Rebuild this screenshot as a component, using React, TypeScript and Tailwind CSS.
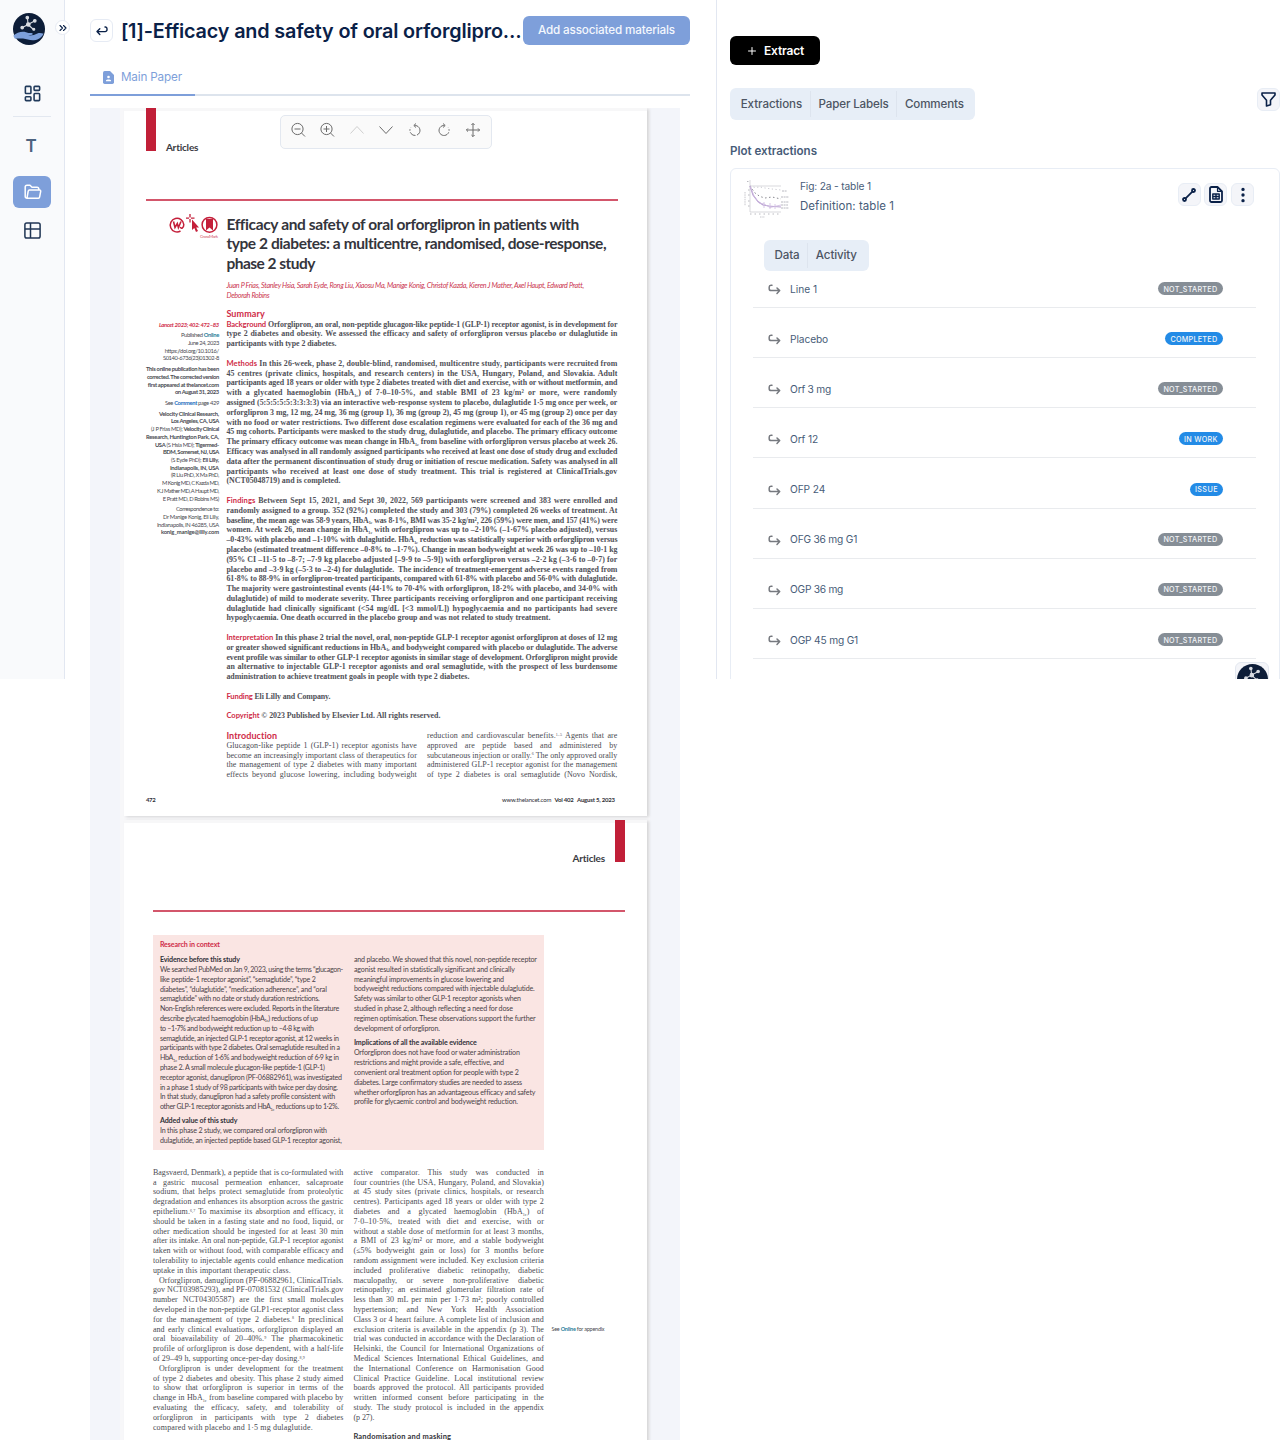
import { useLayoutEffect, useRef, type ReactNode } from "react";
import { LayoutDashboard, Plus, ChevronsRight } from "lucide-react";
import { BsThreeDotsVertical } from "react-icons/bs";
import { TbLine } from "react-icons/tb";

/* Inline text tracked to an exact measure. */
function Fit({ w, className = "", children }: { w: number; className?: string; children: ReactNode }) {
  const ref = useRef<HTMLSpanElement>(null);
  useLayoutEffect(() => {
    const el = ref.current;
    if (!el) return;
    el.style.letterSpacing = "0px";
    const natural = el.getBoundingClientRect().width;
    const n = (el.textContent || "").length || 1;
    el.style.letterSpacing = (w - natural) / n + "px";
  }, [w]);
  return (
    <span ref={ref} className={"inline-block whitespace-nowrap " + className}>
      {children}
    </span>
  );
}

/* "~" is the 1c subscript, "^…^" a superscript reference. */
function rich(text: string) {
  return text.split(/(~|\^[^^]*\^)/).map((s, i) => {
    if (s === "~") return <span key={i} className="relative top-[1.5px] text-[4px]">1c</span>;
    if (s.startsWith("^")) return <span key={i} className="relative -top-[2.5px] text-[4px]">{s.slice(1, -1)}</span>;
    return s;
  });
}

/* One set line of the paper: justified to the measure w, or tracked to it when `end` is given. */
function Line({ t, w, end, label, indent }: { t: string; w: number; end?: number; label?: string; indent?: boolean }) {
  const ref = useRef<HTMLSpanElement>(null);
  useLayoutEffect(() => {
    const el = ref.current;
    if (!el) return;
    el.style.letterSpacing = "0px";
    el.style.wordSpacing = "0px";
    const target = (end ?? w) - (indent ? 6 : 0);
    const natural = el.getBoundingClientRect().width;
    const txt = el.textContent || "";
    const spaces = (txt.match(/ /g) || []).length || 1;
    const diff = target - natural;
    if (end !== undefined || diff < 0) el.style.letterSpacing = diff / txt.length + "px";
    else {
      const ls = Math.min(0.08, diff / txt.length);
      el.style.letterSpacing = ls + "px";
      el.style.wordSpacing = (diff - ls * txt.length) / spaces + "px";
    }
  }, [w, end, indent]);
  return (
    <div className={"h-[9.8px] whitespace-pre leading-[9.8px] " + (indent ? "pl-[6px]" : "")}>
      <span ref={ref} className="inline-block">
        {label && <span className="font-['Lato'] text-[7.6px] font-bold text-[#cf2c48]">{label} </span>}
        {rich(t)}
      </span>
    </div>
  );
}

type L = { t: string; end?: number; label?: string; indent?: boolean } | string;

function Lines({ lines, w }: { lines: L[]; w: number }) {
  return (
    <>
      {lines.map((l, i) => {
        const o = typeof l === "string" ? { t: l } : l;
        return o.t === "" ? <div key={i} className="h-[9.8px]" /> : <Line key={i} w={w} {...o} />;
      })}
    </>
  );
}

const abstract: L[] = [
  { label: "Background", t: "Orforglipron, an oral, non-peptide glucagon-like peptide-1 (GLP-1) receptor agonist, is in development for" },
  "type 2 diabetes and obesity. We assessed the efficacy and safety of orforglipron versus placebo or dulaglutide in",
  { t: "participants with type 2 diabetes.", end: 110 },
  "",
  { label: "Methods", t: "In this 26-week, phase 2, double-blind, randomised, multicentre study, participants were recruited from" },
  "45 centres (private clinics, hospitals, and research centers) in the USA, Hungary, Poland, and Slovakia. Adult",
  "participants aged 18 years or older with type 2 diabetes treated with diet and exercise, with or without metformin, and",
  "with a glycated haemoglobin (HbA~) of 7·0–10·5%, and stable BMI of 23 kg/m² or more, were randomly",
  "assigned (5:5:5:5:5:3:3:3:3) via an interactive web-response system to placebo, dulaglutide 1·5 mg once per week, or",
  "orforglipron 3 mg, 12 mg, 24 mg, 36 mg (group 1), 36 mg (group 2), 45 mg (group 1), or 45 mg (group 2) once per day",
  "with no food or water restrictions. Two different dose escalation regimens were evaluated for each of the 36 mg and",
  "45 mg cohorts. Participants were masked to the study drug, dulaglutide, and placebo. The primary efficacy outcome",
  "The primary efficacy outcome was mean change in HbA~ from baseline with orforglipron versus placebo at week 26.",
  "Efficacy was analysed in all randomly assigned participants who received at least one dose of study drug and excluded",
  "data after the permanent discontinuation of study drug or initiation of rescue medication. Safety was analysed in all",
  "participants who received at least one dose of study treatment. This trial is registered at ClinicalTrials.gov",
  { t: "(NCT05048719) and is completed.", end: 114 },
  "",
  { label: "Findings", t: "Between Sept 15, 2021, and Sept 30, 2022, 569 participants were screened and 383 were enrolled and" },
  "randomly assigned to a group. 352 (92%) completed the study and 303 (79%) completed 26 weeks of treatment. At",
  "baseline, the mean age was 58·9 years, HbA~ was 8·1%, BMI was 35·2 kg/m², 226 (59%) were men, and 157 (41%) were",
  "women. At week 26, mean change in HbA~ with orforglipron was up to –2·10% (–1·67% placebo adjusted), versus",
  "–0·43% with placebo and –1·10% with dulaglutide. HbA~ reduction was statistically superior with orforglipron versus",
  "placebo (estimated treatment difference –0·8% to –1·7%). Change in mean bodyweight at week 26 was up to –10·1 kg",
  "(95% CI –11·5 to –8·7; –7·9 kg placebo adjusted [–9·9 to –5·9]) with orforglipron versus –2·2 kg (–3·6 to –0·7) for",
  "placebo and –3·9 kg (–5·3 to –2·4) for dulaglutide.  The incidence of treatment-emergent adverse events ranged from",
  "61·8% to 88·9% in orforglipron-treated participants, compared with 61·8% with placebo and 56·0% with dulaglutide.",
  "The majority were gastrointestinal events (44·1% to 70·4% with orforglipron, 18·2% with placebo, and 34·0% with",
  "dulaglutide) of mild to moderate severity. Three participants receiving orforglipron and one participant receiving",
  "dulaglutide had clinically significant (<54 mg/dL [<3 mmol/L]) hypoglycaemia and no participants had severe",
  { t: "hypoglycaemia. One death occurred in the placebo group and was not related to study treatment.", end: 324 },
  "",
  { label: "Interpretation", t: "In this phase 2 trial the novel, oral, non-peptide GLP-1 receptor agonist orforglipron at doses of 12 mg" },
  "or greater showed significant reductions in HbA~ and bodyweight compared with placebo or dulaglutide. The adverse",
  "event profile was similar to other GLP-1 receptor agonists in similar stage of development. Orforglipron might provide",
  "an alternative to injectable GLP-1 receptor agonists and oral semaglutide, with the prospect of less burdensome",
  { t: "administration to achieve treatment goals in people with type 2 diabetes.", end: 243 },
  "",
  { label: "Funding", t: "Eli Lilly and Company.", end: 104 },
  "",
  { label: "Copyright", t: "© 2023 Published by Elsevier Ltd. All rights reserved.", end: 214 },
  "",
];

const introLeft: L[] = [
  "Glucagon-like peptide 1 (GLP-1) receptor agonists have",
  "become an increasingly important class of therapeutics for",
  "the management of type 2 diabetes with many important",
  "effects beyond glucose lowering, including bodyweight",
];
const introRight: L[] = [
  "reduction and cardiovascular benefits.^1–5^ Agents that are",
  "approved are peptide based and administered by",
  "subcutaneous injection or orally.^6^ The only approved orally",
  "administered GLP-1 receptor agonist for the management",
  "of type 2 diabetes is oral semaglutide (Novo Nordisk,",
];

const bodyLeft: L[] = [
  "Bagsvaerd, Denmark), a peptide that is co-formulated with",
  "a gastric mucosal permeation enhancer, salcaproate",
  "sodium, that helps protect semaglutide from proteolytic",
  "degradation and enhances its absorption across the gastric",
  "epithelium.^6,7^ To maximise its absorption and efficacy, it",
  "should be taken in a fasting state and no food, liquid, or",
  "other medication should be ingested for at least 30 min",
  "after its intake. An oral non-peptide, GLP-1 receptor agonist",
  "taken with or without food, with comparable efficacy and",
  "tolerability to injectable agents could enhance medication",
  { t: "uptake in this important therapeutic class.", end: 138 },
  { t: "Orforglipron, danuglipron (PF-06882961, ClinicalTrials.", indent: true },
  "gov NCT03985293), and PF-07081532 (ClinicalTrials.gov",
  "number NCT04305587) are the first small molecules",
  "developed in the non-peptide GLP1-receptor agonist class",
  "for the management of type 2 diabetes.^8^ In preclinical",
  "and early clinical evaluations, orforglipron displayed an",
  "oral bioavailability of 20–40%.^9^ The pharmacokinetic",
  "profile of orforglipron is dose dependent, with a half-life",
  { t: "of 29–49 h, supporting once-per-day dosing.^8,9^", end: 152 },
  { t: "Orforglipron is under development for the treatment", indent: true },
  "of type 2 diabetes and obesity. This phase 2 study aimed",
  "to show that orforglipron is superior in terms of the",
  "change in HbA~ from baseline compared with placebo by",
  "evaluating the efficacy, safety, and tolerability of",
  "orforglipron in participants with type 2 diabetes",
  { t: "compared with placebo and 1·5 mg dulaglutide.", end: 160 },
];
const bodyRight: L[] = [
  "active comparator. This study was conducted in",
  "four countries (the USA, Hungary, Poland, and Slovakia)",
  "at 45 study sites (private clinics, hospitals, or research",
  "centres). Participants aged 18 years or older with type 2",
  "diabetes and a glycated haemoglobin (HbA~) of",
  "7·0–10·5%, treated with diet and exercise, with or",
  "without a stable dose of metformin for at least 3 months,",
  "a BMI of 23 kg/m² or more, and a stable bodyweight",
  "(≤5% bodyweight gain or loss) for 3 months before",
  "random assignment were included. Key exclusion criteria",
  "included proliferative diabetic retinopathy, diabetic",
  "maculopathy, or severe non-proliferative diabetic",
  "retinopathy; an estimated glomerular filtration rate of",
  "less than 30 mL per min per 1·73 m²; poorly controlled",
  "hypertension; and New York Health Association",
  "Class 3 or 4 heart failure. A complete list of inclusion and",
  "exclusion criteria is available in the appendix (p 3). The",
  "trial was conducted in accordance with the Declaration of",
  "Helsinki, the Council for International Organizations of",
  "Medical Sciences International Ethical Guidelines, and",
  "the International Conference on Harmonisation Good",
  "Clinical Practice Guideline. Local institutional review",
  "boards approved the protocol. All participants provided",
  "written informed consent before participating in the",
  "study. The study protocol is included in the appendix",
  { t: "(p 27).", end: 21 },
];

const boxLeft: L[] = [
  { t: "We searched PubMed on Jan 9, 2023, using the terms “glucagon-", end: 183 },
  { t: "like peptide-1 receptor agonist”, “semaglutide”, “type 2", end: 156 },
  { t: "diabetes”, “dulaglutide”, “medication adherence”, and “oral", end: 167 },
  { t: "semaglutide” with no date or study duration restrictions.", end: 160 },
  { t: "Non-English references were excluded. Reports in the literature", end: 179 },
  { t: "describe glycated haemoglobin (HbA~) reductions of up", end: 158 },
  { t: "to –1·7% and bodyweight reduction up to –4·8 kg with", end: 154 },
  { t: "semaglutide, an injected GLP-1 receptor agonist, at 12 weeks in", end: 179 },
  { t: "participants with type 2 diabetes. Oral semaglutide resulted in a", end: 180 },
  { t: "HbA~ reduction of 1·6% and bodyweight reduction of 6·9 kg in", end: 179 },
  { t: "phase 2. A small molecule glucagon-like peptide-1 (GLP-1)", end: 165 },
  { t: "receptor agonist, danuglipron (PF-06882961), was investigated", end: 182 },
  { t: "in a phase 1 study of 98 participants with twice per day dosing.", end: 178 },
  { t: "In that study, danuglipron had a safety profile consistent with", end: 175 },
  { t: "other GLP-1 receptor agonists and HbA~ reductions up to 1·2%.", end: 179 },
];
const boxLeft2: L[] = [
  { t: "In this phase 2 study, we compared oral orforglipron with", end: 167 },
  { t: "dulaglutide, an injected peptide based GLP-1 receptor agonist,", end: 182 },
];
const boxRight: L[] = [
  { t: "and placebo. We showed that this novel, non-peptide receptor", end: 183 },
  { t: "agonist resulted in statistically significant and clinically", end: 161 },
  { t: "meaningful improvements in glucose lowering and", end: 150 },
  { t: "bodyweight reductions compared with injectable dulaglutide.", end: 181 },
  { t: "Safety was similar to other GLP-1 receptor agonists when", end: 167 },
  { t: "studied in phase 2, although reflecting a need for dose", end: 159 },
  { t: "regimen optimisation. These observations support the further", end: 182 },
  { t: "development of orforglipron.", end: 86 },
];
const boxRight2: L[] = [
  { t: "Orforglipron does not have food or water administration", end: 166 },
  { t: "restrictions and might provide a safe, effective, and", end: 150 },
  { t: "convenient oral treatment option for people with type 2", end: 165 },
  { t: "diabetes. Large confirmatory studies are needed to assess", end: 168 },
  { t: "whether orforglipron has an advantageous efficacy and safety", end: 181 },
  { t: "profile for glycaemic control and bodyweight reduction.", end: 164 },
];

const sideNotes: [number, ReactNode][][] = [
  [[60, <b className="font-bold italic text-[#cf2c48]">Lancet 2023; 402: 472–83</b>]],
  [
    [38, <>Published <b className="text-[#2b7f9c]">Online</b></>],
    [31, "June 24, 2023"],
    [54, "https://doi.org/10.1016/"],
    [56, "S0140-6736(23)01302-8"],
  ],
  [
    [73, <b>This online publication has been</b>],
    [72, <b>corrected. The corrected version</b>],
    [71, <b>first appeared at thelancet.com</b>],
    [44, <b>on August 31, 2023</b>],
  ],
  [[54, <>See <b className="text-[#1f6fc0]">Comment</b> page 429</>]],
  [
    [60, <b>Velocity Clinical Research,</b>],
    [48, <b>Los Angeles, CA, USA</b>],
    [68, <>(J P Frias MD); <b>Velocity Clinical</b></>],
    [73, <b>Research, Huntington Park, CA,</b>],
    [64, <><b>USA</b> (S Hsia MD); <b>Tigermed-</b></>],
    [56, <b>BDM, Somerset, NJ, USA</b>],
    [48, <>(S Eyde PhD); <b>Eli Lilly,</b></>],
    [49, <b>Indianapolis, IN, USA</b>],
    [48, "(R Liu PhD, X Ma PhD,"],
    [57, "M Konig MD, C Kazda MD,"],
    [62, "K J Mather MD, A Haupt MD,"],
    [56, "E Pratt MD, D Robins MS)"],
  ],
  [
    [43, "Correspondence to:"],
    [56, "Dr Manige Konig, Eli Lilly,"],
    [62, "Indianapolis, IN 46285, USA"],
    [58, <b>konig_manige@lilly.com</b>],
  ],
];

const rows: { name: string; w: number; status: string; bw: string; tw: number; blue?: boolean }[] = [
  { name: "Line 1", w: 27, status: "NOT_STARTED", bw: "w-[65px]", tw: 54 },
  { name: "Placebo", w: 38, status: "COMPLETED", bw: "w-[58px]", tw: 47, blue: true },
  { name: "Orf 3 mg", w: 41, status: "NOT_STARTED", bw: "w-[65px]", tw: 54 },
  { name: "Orf 12", w: 28, status: "IN WORK", bw: "w-[44px]", tw: 34, blue: true },
  { name: "OFP 24", w: 35, status: "ISSUE", bw: "w-[33px]", tw: 23, blue: true },
  { name: "OFG 36 mg G1", w: 67, status: "NOT_STARTED", bw: "w-[65px]", tw: 54 },
  { name: "OGP 36 mg", w: 53, status: "NOT_STARTED", bw: "w-[65px]", tw: 54 },
  { name: "OGP 45 mg G1", w: 68, status: "NOT_STARTED", bw: "w-[65px]", tw: 54 },
];

function Logo({ size }: { size: number }) {
  return (
    <svg width={size} height={size} viewBox="0 0 32 32" className="shrink-0">
      <circle cx="16" cy="16" r="16" fill="#0d1d38" />
      <g stroke="#d9dce2" strokeWidth="1.100" fill="#d9dce2">
        <path d="M15 11.500 14.500 5M15 11.500 21.500 8M15 11.500 9.500 14.500M15 11.500 20.500 16.500" fill="none" />
        <circle cx="15.300" cy="11.500" r="1.800" />
        <circle cx="14.300" cy="4.600" r="1.300" />
        <circle cx="21.800" cy="7.800" r="1.300" />
        <circle cx="9.200" cy="14.600" r="1.300" />
        <circle cx="20.800" cy="16.300" r="1" />
      </g>
      <path
        d="M0.400 22.500C4 19.200 9 18 13 19.200c2 .6 3.500 1 5.500.9 1.400 0 1.700 1.200.6 1.600l-4 .7c3 .6 6.500-.4 9.300-1.800 1.800-.9 4-.5 6.300.1C29 23.500 26 26.800 21 27.200c-4 .4-7-1-11-1.600-3-.4-5.500-.2-8 .1C1.200 24.900.7 23.800.4 22.500z"
        fill="#7d9fda"
      />
    </svg>
  );
}

const reply = (
  <svg width="13" height="12" viewBox="0 0 13 12" fill="none" stroke="#76797f" strokeWidth="1.500" strokeLinecap="round" strokeLinejoin="round">
    <path d="M4 1.200H3A1.900 1.900 0 0 0 1.200 3.100V4.700A1.900 1.900 0 0 0 3.100 6.600H11.500M9 4 11.700 6.600 9 9.400" />
  </svg>
);

function IconButton({ children }: { children: ReactNode }) {
  return (
    <div className="flex h-[23px] w-[23px] items-center justify-center rounded-[6px] border border-[#e8edf5] bg-[#f4f5f9] text-[#0a2148]">
      {children}
    </div>
  );
}

function Sidebar() {
  return (
    <aside className="relative flex h-[679px] w-[65px] shrink-0 flex-col border-r border-[#e2e7f1] bg-[#f9fafc] pl-[13px] pt-[13px]">
      <div><Logo size={32} /></div>
      <div className="absolute left-[55px] top-5 z-10 flex h-[15px] w-[15px] items-center justify-center rounded-full border border-[#e6eaf3] bg-white text-[#0a2148]">
        <ChevronsRight size={12} strokeWidth={2.200} className="shrink-0" />
      </div>
      <div className="mt-[39px] flex w-[39px] justify-center text-[#213a5b]">
        <LayoutDashboard size={19} strokeWidth={2} />
      </div>
      <div className="mt-[13px] h-px w-[38px] bg-[#e3e8f0]" />
      <div className="mt-[18px] flex h-6 w-[38px] items-center justify-center pr-[2px] font-['Inter'] text-[17px] font-semibold text-[#4d6380]">T</div>
      <div className="mt-[16.500px] flex h-[32.500px] w-[38px] items-center justify-center rounded-[6px] bg-[#7e9fda] text-white">
        <svg width="18" height="16" viewBox="0 0 18 16" fill="none" stroke="currentColor" strokeWidth="1.500" strokeLinejoin="round" className="ml-px">
          <path d="M3 14.200H14.400a1.200 1.200 0 0 0 1.200-1L16.700 7.300a1 1 0 0 0-1-1.200H5.500a1.300 1.300 0 0 0-1.300 1L3 14.200ZM3 14.200A1.800 1.800 0 0 1 1.200 12.400V3A1.800 1.800 0 0 1 3 1.200H6L8 3.200H13A1.800 1.800 0 0 1 14.800 5V6" />
        </svg>
      </div>
      <div className="mt-[14px] flex w-[39px] justify-center">
        <svg width="17" height="17" viewBox="0 0 17 17" fill="none" stroke="#203554" strokeWidth="1.500">
          <rect x="0.900" y="0.900" width="15.200" height="15.200" rx="1.800" />
          <path d="M6.500 1V16M1 7H16" />
        </svg>
      </div>
    </aside>
  );
}

function Toolbar() {
  return (
    <div className="absolute left-[190px] top-[6.500px] z-10 flex h-[34px] w-[212px] items-start gap-[9.100px] rounded-[5px] border border-[#e3e8f0] bg-[#fafafa] pl-[7px] pt-[4.500px]">
      {[
        <><circle cx="9.500" cy="9" r="5.600" /><path d="M13.500 13 17 16.500M6.500 9H12.500" /></>,
        <><circle cx="9.500" cy="9" r="5.600" /><path d="M13.500 13 17 16.500M6.500 9H12.500M9.500 6V12" /></>,
        <path d="M3.500 13.500 10 6.500 16.500 13.500" stroke="#cfcfcf" />,
        <path d="M3.500 6.500 10 13.500 16.500 6.500" />,
        <><path d="M9.500 5.500A5 5 0 1 1 6 13.500" strokeDasharray="14 1.500" /><path d="M6 13.500A5 5 0 0 1 5.800 7.500" strokeDasharray="1.500 1.500" /><path d="M11 3.500 8.800 5.500 11 7.500" /></>,
        <><path d="M10.500 5.500A5 5 0 1 0 14 13.500" /><path d="M14 13.500A5 5 0 0 0 14.200 7.500" strokeDasharray="1.500 1.500" /><path d="M9 3.500 11.200 5.500 9 7.500" /></>,
        <path d="M10 3.500V16.500M3.500 10H16.500M8.400 5 10 3.400 11.600 5M8.400 15 10 16.600 11.600 15M5 8.400 3.400 10 5 11.600M15 8.400 16.600 10 15 11.600" />,
      ].map((p, i) => (
        <svg key={i} width="20" height="20" viewBox="0 0 20 20" fill="none" stroke="#6b6b6b" strokeWidth="1" className="shrink-0">
          {p}
        </svg>
      ))}
    </div>
  );
}

function PageOne() {
  return (
    <div className="h-[708px] w-[523px] border-t-[3px] border-[#f7f7f8] bg-white pl-[22px] font-['Lato'] text-[#2f3038] shadow-[2px_1px_3px_rgba(0,0,0,0.14)]">
      <div className="-mt-[3px] flex">
        <div className="h-[42.500px] w-[10px] bg-[#c11f38]" />
        <div className="pl-[10px] pt-[31.500px] text-[10px] font-bold leading-[14px] text-[#3a3b42]">
          <Fit w={32.500}>Articles</Fit>
        </div>
      </div>
      <div className="mt-[45px] h-[2px] w-[472px] bg-[#d3566b]" />
      <div className="flex">
        <div className="w-[73px] shrink-0 pt-[13px]">
          <div className="flex h-[29px] justify-end">
            <svg width="51" height="26" viewBox="0 0 51 26" fill="none" stroke="#c41f3a">
              <path d="M12.500 17A6.800 6.800 0 1 1 15.800 10.500C15.800 14.500 13 15 12.200 13" strokeWidth="1.500" />
              <path d="M5.500 7.500 7 13.500 9.300 9.500 10.400 13.500 13 7.500" strokeWidth="1.600" />
              <path d="M22 0V3.500M22 5V8.500M18 4.200H21M23 4.200H26.500" strokeWidth="1.300" />
              <path d="M24 5.500V16L26.300 14 28 18 30 17 28.200 13.400H31Z" fill="#c41f3a" stroke="none" />
              <circle cx="41.500" cy="10.800" r="7.400" strokeWidth="1.500" />
              <path d="M38 5H45V16.500L41.500 13.500 38 16.500Z" fill="#c41f3a" stroke="none" />
              <text x="32" y="24" fontSize="4.500" fill="#d4576b" stroke="none" textLength="18">CrossMark</text>
            </svg>
          </div>
          <div className="mt-[78px] flex flex-col gap-[3px] text-right text-[5.800px] text-[#4a4b52]">
            {sideNotes.map((g, i) => (
              <div key={i}>
                {g.map(([w, c], j) => (
                  <div key={j} className="flex h-[7.720px] justify-end leading-[7.720px]">
                    <Fit w={w}>{c}</Fit>
                  </div>
                ))}
              </div>
            ))}
          </div>
        </div>
        <div className="w-[392px] pl-[7.500px] pt-[14.200px]">
          <div className="text-[15.500px] font-bold leading-[19.500px] text-[#34353c]">
            <div className="h-[19.500px]"><Fit w={352}>Efficacy and safety of oral orforglipron in patients with</Fit></div>
            <div className="h-[19.500px]"><Fit w={380}>type 2 diabetes: a multicentre, randomised, dose-response,</Fit></div>
            <div className="h-[19.500px]"><Fit w={88.500}>phase 2 study</Fit></div>
          </div>
          <div className="mt-[8px] text-[7.200px] italic leading-[9.800px] text-[#cb3650]">
            <div className="h-[9.800px]"><Fit w={357}>Juan P Frias, Stanley Hsia, Sarah Eyde, Rong Liu, Xiaosu Ma, Manige Konig, Christof Kazda, Kieren J Mather, Axel Haupt, Edward Pratt,</Fit></div>
            <div className="h-[9.800px]"><Fit w={43}>Deborah Robins</Fit></div>
          </div>
          <div className="mt-[8.500px] h-[9.800px] text-[9px] font-bold leading-[9.800px] text-[#cf2c48]"><Fit w={38.500}>Summary</Fit></div>
          <div className="pt-[0.500px] font-['Liberation_Serif'] text-[7.900px] font-bold text-[#505158]">
            <Lines lines={abstract} w={391} />
          </div>
          <div className="flex w-[392px] gap-[9.500px] font-['Liberation_Serif'] text-[8px] text-[#4a4b52]">
            <div className="w-[191px]">
              <div className="h-[9.800px] font-['Lato'] text-[9px] font-bold leading-[9.800px] text-[#cf2c48]"><Fit w={51}>Introduction</Fit></div>
              <Lines lines={introLeft} w={190.500} />
            </div>
            <div className="w-[191px]"><Lines lines={introRight} w={190.500} /></div>
          </div>
        </div>
      </div>
      <div className="mt-[15px] flex w-[469px] justify-between text-[6px] leading-[9.800px]">
        <Fit w={9.500} className="font-bold">472</Fit>
        <Fit w={113}>www.thelancet.com <b className="ml-[2px]">Vol 402</b> <b className="ml-[2px]">August 5, 2023</b></Fit>
      </div>
    </div>
  );
}

function PageTwo() {
  return (
    <div className="mt-[3.500px] h-[800px] w-[523px] border-t-[3px] border-[#f7f7f8] bg-white pl-[29px] font-['Lato'] text-[#2f3038] shadow-[2px_1px_3px_rgba(0,0,0,0.14)]">
      <div className="-mt-[3px] flex h-[45px] w-[472px] items-start justify-end">
        <div className="pr-[10px] pt-[31px] text-[10px] font-bold leading-[14px] text-[#3a3b42]">
          <Fit w={32.500}>Articles</Fit>
        </div>
        <div className="h-[42.500px] w-[10px] bg-[#c11f38]" />
      </div>
      <div className="mt-[45.500px] h-[2px] w-[472px] bg-[#d3566b]" />
      <div className="mt-[22.500px] h-[215.500px] w-[391.500px] bg-[#fae5e3] px-[7px] pt-[5.200px] text-[7.100px] text-[#4a4348]">
        <div className="h-[9.800px] font-bold leading-[9.800px] text-[#cf2c48]"><Fit w={60}>Research in context</Fit></div>
        <div className="mt-[5.200px] flex gap-[11px]">
          <div className="w-[183px]">
            <div className="mb-[0.500px] h-[9.800px] font-bold leading-[9.800px] text-[#33333a]"><Fit w={80}>Evidence before this study</Fit></div>
            <Lines lines={boxLeft} w={183} />
            <div className="mt-[4.500px] h-[9.800px] font-bold leading-[9.800px] text-[#33333a]"><Fit w={77.500}>Added value of this study</Fit></div>
            <Lines lines={boxLeft2} w={183} />
          </div>
          <div className="w-[183px] pt-[0.300px]">
            <Lines lines={boxRight} w={183} />
            <div className="mb-[0.500px] mt-[4.700px] h-[9.800px] font-bold leading-[9.800px] text-[#33333a]"><Fit w={123}>Implications of all the available evidence</Fit></div>
            <Lines lines={boxRight2} w={183} />
          </div>
        </div>
      </div>
      <div className="mt-[17.900px] flex font-['Liberation_Serif'] text-[8px] text-[#4a4b52]">
        <div className="w-[200.500px]"><Lines lines={bodyLeft} w={190.500} /></div>
        <div className="w-[198px]">
          <Lines lines={bodyRight} w={190.500} />
          <div className="mt-[9px] h-[9.800px] font-['Lato'] text-[7.500px] font-bold leading-[9.800px] text-[#33333a]"><Fit w={98}>Randomisation and masking</Fit></div>
        </div>
        <div className="pt-[157.500px] font-['Lato'] text-[5.500px] leading-[9.800px]">
          <Fit w={53}>See <b className="text-[#2b7f9c]">Online</b> for appendix</Fit>
        </div>
      </div>
    </div>
  );
}

function Reader() {
  return (
    <main className="flex h-[1440px] w-[651px] shrink-0 flex-col overflow-hidden pl-[25.400px] font-['Inter']">
      <div className="flex h-[61px] w-[600px] items-center">
        <div className="flex h-[23px] w-[23px] shrink-0 items-center justify-center rounded-[6px] border border-[#e6ebf4] bg-white">
          <svg width="12" height="10" viewBox="0 0 12 10" fill="none" stroke="#0a2148" strokeWidth="1.400" strokeLinecap="round" strokeLinejoin="round">
            <path d="M9 1H9.400A1.800 1.800 0 0 1 11 2.800V3.800A1.800 1.800 0 0 1 9.200 5.600H1.200M3.800 2.800 1 5.600 3.800 8.400" />
          </svg>
        </div>
        <h1 className="ml-[7.500px] w-[402px] text-[19.800px] font-semibold leading-[28px] text-[#0a2148]">
          <Fit w={400.500}>[1]-Efficacy and safety of oral orforglipro…</Fit>
        </h1>
        <div className="flex h-[29px] w-[167px] shrink-0 items-center justify-center rounded-[6px] bg-[#7e9fda] text-[11.700px] font-medium text-[#f4f7fd]">
          <Fit w={137} className="pt-px">Add associated materials</Fit>
        </div>
      </div>
      <div className="flex h-[35px] w-[600px] border-b-2 border-[#dde4ed]">
        <div className="-mb-[2px] flex w-[104.500px] items-center border-b-2 border-[#7e9fda] pl-[12.500px] text-[11.700px] text-[#7e9fda]">
          <svg width="11" height="13" viewBox="0 0 11 13" fill="#7e9fda">
            <path d="M1.700 0H7L11 4V11.300A1.700 1.700 0 0 1 9.300 13H1.700A1.700 1.700 0 0 1 0 11.300V1.700A1.700 1.700 0 0 1 1.700 0Z" />
            <circle cx="5.500" cy="6" r="1.300" fill="#fff" />
            <path d="M3 10.300V9.500C3.500 8.200 7.500 8.200 8 9.500V10.300Z" fill="#fff" />
          </svg>
          <Fit w={61} className="ml-[7px] pt-px">Main Paper</Fit>
        </div>
      </div>
      <div className="relative mt-3 h-[1332px] w-[590px] overflow-hidden bg-[#f3f5fa]">
        <Toolbar />
        <div className="ml-[30px] h-full w-[530px] bg-[#f7f7f9] pl-[3.500px]">
          <PageOne />
          <PageTwo />
        </div>
      </div>
    </main>
  );
}

function Tabs({ items, className }: { items: [string, number][]; className: string }) {
  return (
    <div className={"flex items-center rounded-[6px] bg-[#e7eef7] py-[3px] text-[11.600px] font-medium text-[#4d5563] " + className}>
      {items.map(([t, w], i) => (
        <div key={t} className={"flex h-full items-center px-[7.700px] " + (i ? "border-l border-[#dde4ee]" : "")}>
          <Fit w={w} className="pt-[2px]">{t}</Fit>
        </div>
      ))}
    </div>
  );
}

function Extractions() {
  return (
    <section className="relative h-[679px] w-[564px] shrink-0 overflow-hidden border-l border-[#e2e7f1] pl-[13px] font-['Inter']">
      <div className="mt-[36px] flex h-[29px] w-[90px] items-center rounded-[6px] bg-black pl-[16px] text-[12px] font-semibold text-white">
        <Plus size={12} strokeWidth={2} />
        <Fit w={40} className="ml-[6px]">Extract</Fit>
      </div>
      <div className="mt-[22.500px] flex items-start justify-between">
        <Tabs className="h-[32px] w-[245px] pl-[3px]" items={[["Extractions", 61.500], ["Paper Labels", 70], ["Comments", 59]]} />
        <IconButton>
          <svg width="15" height="15" viewBox="0 0 15 15" fill="none" stroke="currentColor" strokeWidth="1.600" strokeLinejoin="round">
            <path d="M1 1H14V3L9.500 8.200V12.800L5.500 14V8.200L1 3Z" />
          </svg>
        </IconButton>
      </div>
      <h2 className="mt-[22.500px] h-[18px] text-[11.600px] font-semibold leading-[18px] text-[#475c78]"><Fit w={87}>Plot extractions</Fit></h2>
      <div className="mt-[8px] h-[560px] rounded-[6px] border border-[#e8edf5] text-[#475c78]">
        <div className="flex pl-[13px] pr-[25px] pt-[9px]">
          <svg width="48" height="40" viewBox="0 0 48 40" fill="none" className="shrink-0">
            <path d="M6 2V34H37M6 8H37" stroke="#c9c9cf" strokeWidth="0.700" />
            <path d="M1 14V28M16 39H21" stroke="#c2c2c8" strokeWidth="0.900" strokeDasharray="1.500 0.800" />
            <path d="M3 3.500H7M4 12H6M4 17H6M4 23H6M4 28H6M6 36H37" stroke="#a8a8b0" strokeWidth="0.800" strokeDasharray="1.500 3" />
            <path d="M6 8 11 9.500 16 9 21 10 28 11 37 12" stroke="#c4c4cc" strokeWidth="0.900" strokeDasharray="1.200 2.500" />
            <path d="M6 8 11 15 16 18.500 21 20 28 19 37 21" stroke="#88888f" strokeWidth="1" strokeDasharray="1.500 2.500" />
            <path d="M6 8 9 17 14 23.500 19 27 25 28 30 28.500 37 29" stroke="#b79fd0" strokeWidth="1.200" />
            <path d="M6 8 10 18 15 25 20 26 26 29.500 37 27M20 24V30M26 25V31M31 26V31" stroke="#cdb9df" strokeWidth="0.800" />
            <path d="M38 13H43M37 19H45M37 24H45M37 27H44M37 30H45" stroke="#b8b8c0" strokeWidth="1" strokeDasharray="2 0.600" />
          </svg>
          <div className="ml-[8px] flex-1">
            <div className="h-[18px] text-[10.200px] leading-[17px]"><Fit w={71}>Fig: 2a - table 1</Fit></div>
            <div className="mt-px h-[18px] text-[11.500px] leading-[18px]"><Fit w={94}>Definition: table 1</Fit></div>
          </div>
          <div className="flex gap-[3.700px] pt-[5px]">
            <IconButton><TbLine size={18} strokeWidth={2.400} /></IconButton>
            <IconButton>
              <svg width="14" height="17" viewBox="0 0 14 17" fill="none" stroke="currentColor" strokeWidth="1.800" strokeLinejoin="round">
                <path d="M2.500 1H8.500L13 5.300V14.500A1.500 1.500 0 0 1 11.500 16H2.500A1.500 1.500 0 0 1 1 14.500V2.500A1.500 1.500 0 0 1 2.500 1Z" />
                <path d="M3.800 8H10.200V13H3.800ZM3.800 10.500H10.200M7 8V13" strokeWidth="1.400" />
                <path d="M8.500 1V5.300H13" strokeWidth="1.200" />
              </svg>
            </IconButton>
            <IconButton><BsThreeDotsVertical size={18} /></IconButton>
          </div>
        </div>
        <div className="pl-[32.800px] pt-[21.500px]">
          <Tabs className="h-[31px] w-[105px] pl-[3px]" items={[["Data", 25], ["Activity", 41]]} />
        </div>
        <div className="-mt-[12.600px] ml-[22.400px] w-[503px]">
          {rows.map((r) => (
            <div key={r.name} className="flex h-[50.150px] items-end border-b border-[#e9ebee] pb-[10px] pl-[14.500px] pr-[33.500px]">
              <div className="flex h-[17px] w-full items-center">
                <div className="pt-[3px]">{reply}</div>
                <Fit w={r.w} className="ml-[9.200px] text-[10.200px] leading-[16px]">{r.name}</Fit>
                <div className={"ml-auto flex h-[13px] items-center justify-center rounded-full text-[7.200px] font-medium leading-[13px] text-[#f3f5f7] " + r.bw + " " + (r.blue ? "bg-[#238be6]" : "bg-[#868e96]")}>
                  <Fit w={r.tw} className="pt-px">{r.status}</Fit>
                </div>
              </div>
            </div>
          ))}
        </div>
      </div>
      <div className="absolute left-[518px] top-[662px] flex h-[34px] w-[34px] items-center justify-center rounded-[6px] border border-[#e3e8f0] bg-[#f4f5f9]">
        <Logo size={31} />
      </div>
    </section>
  );
}

export default function App() {
  return (
    <div className="flex h-[1440px] w-[1280px] items-start overflow-hidden bg-white">
      <Sidebar />
      <Reader />
      <Extractions />
    </div>
  );
}
